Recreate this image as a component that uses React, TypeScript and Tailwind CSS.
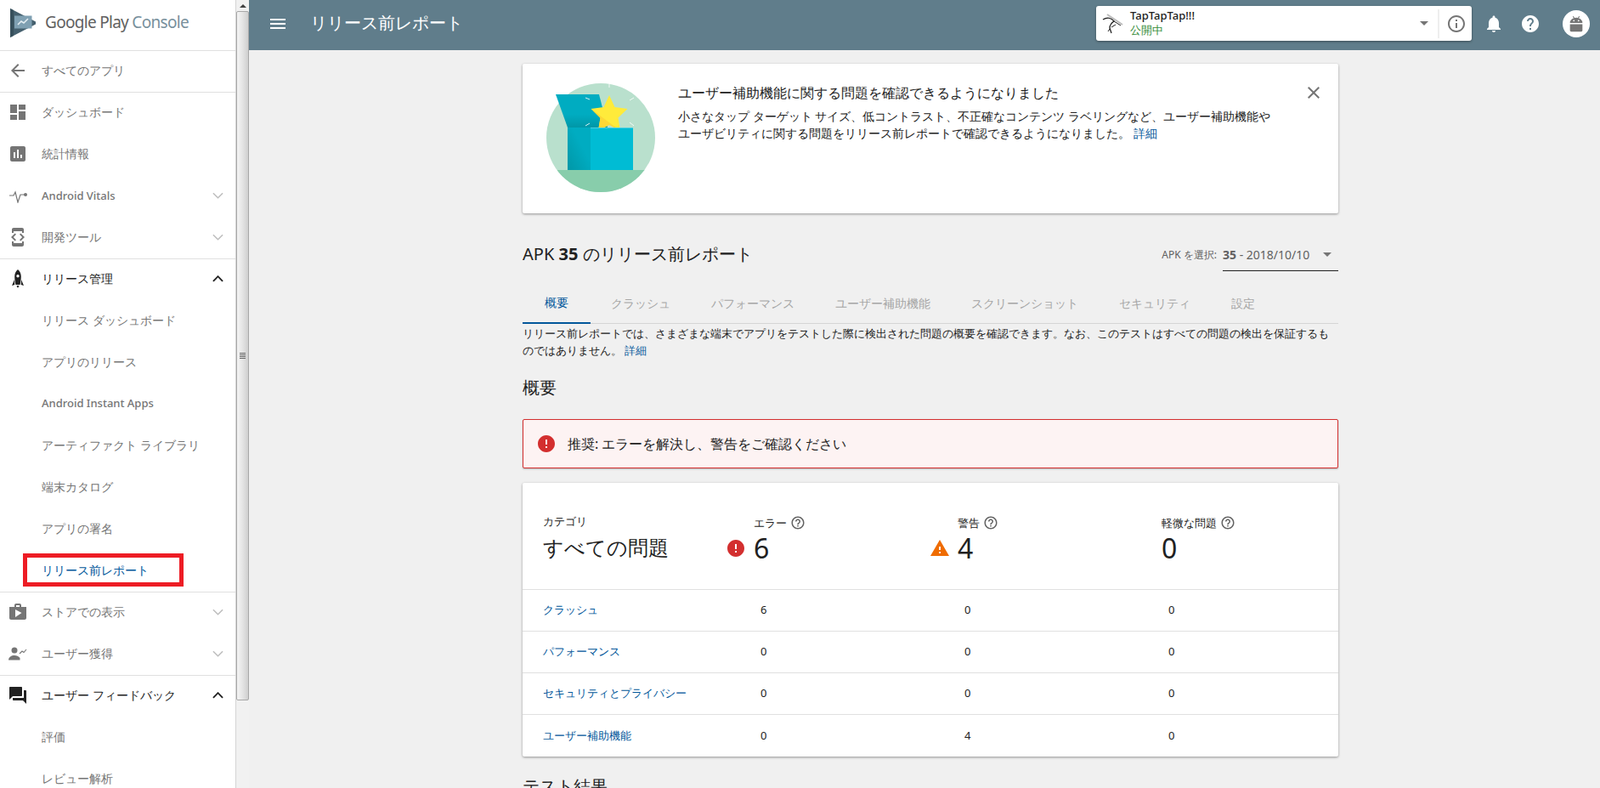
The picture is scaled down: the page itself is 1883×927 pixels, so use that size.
import React from "react";

const P = {
  back: "M20 11H7.83l5.59-5.59L12 4l-8 8 8 8 1.41-1.41L7.83 13H20v-2z",
  dash: "M3 13h8V3H3v10zm0 8h8v-6H3v6zm10 0h8V11h-8v10zm0-18v6h8V3h-8z",
  stats: "M19 3H5c-1.1 0-2 .9-2 2v14c0 1.1.9 2 2 2h14c1.1 0 2-.9 2-2V5c0-1.1-.9-2-2-2zM9 17H7v-7h2v7zm4 0h-2V7h2v10zm4 0h-2v-4h2v4z",
  dev: "M7 5h10v2h2V3c0-1.1-.9-1.99-2-1.99L7 1c-1.1 0-2 .9-2 2v4h2V5zm8.41 11.59L20 12l-4.59-4.59L14 8.83 17.17 12 14 15.17l1.41 1.42zM10 15.17L6.83 12 10 8.83 8.59 7.41 4 12l4.59 4.59L10 15.17zM17 19H7v-2H5v4c0 1.1.9 2 2 2h10c1.1 0 2-.9 2-2v-4h-2v2z",
  shop: "M16 6V4c0-1.11-.89-2-2-2h-4c-1.11 0-2 .89-2 2v2H2v13c0 1.11.89 2 2 2h16c1.11 0 2-.89 2-2V6h-6zm-6-2h4v2h-4V4zM9 18V9l7.5 4L9 18z",
  qa: "M21 6h-2v9H6v2c0 .55.45 1 1 1h11l4 4V7c0-.55-.45-1-1-1zm-4 6V3c0-.55-.45-1-1-1H3c-.55 0-1 .45-1 1v14l4-4h10c.55 0 1-.45 1-1z",
  bell: "M12 22c1.1 0 2-.9 2-2h-4c0 1.1.89 2 2 2zm6-6v-5c0-3.07-1.64-5.64-4.5-6.32V4c0-.83-.67-1.5-1.5-1.5s-1.5.67-1.5 1.5v.68C7.63 5.36 6 7.92 6 11v5l-2 2v1h16v-1l-2-2z",
  help: "M12 2C6.48 2 2 6.48 2 12s4.48 10 10 10 10-4.48 10-10S17.52 2 12 2zm1 17h-2v-2h2v2zm2.07-7.75l-.9.92C13.45 12.9 13 13.5 13 15h-2v-.5c0-1.1.45-2.1 1.17-2.83l1.24-1.26c.37-.36.59-.86.59-1.41 0-1.1-.9-2-2-2s-2 .9-2 2H8c0-2.21 1.79-4 4-4s4 1.79 4 4c0 .88-.36 1.68-.93 2.25z",
  helpO: "M11 18h2v-2h-2v2zm1-16C6.48 2 2 6.48 2 12s4.48 10 10 10 10-4.48 10-10S17.52 2 12 2zm0 18c-4.41 0-8-3.59-8-8s3.59-8 8-8 8 3.59 8 8-3.59 8-8 8zm0-14c-2.21 0-4 1.79-4 4h2c0-1.1.9-2 2-2s2 .9 2 2c0 2-3 1.75-3 5h2c0-2.25 3-2.5 3-5 0-2.21-1.79-4-4-4z",
  info: "M11 7h2v2h-2zm0 4h2v6h-2zm1-9C6.48 2 2 6.48 2 12s4.48 10 10 10 10-4.48 10-10S17.52 2 12 2zm0 18c-4.41 0-8-3.59-8-8s3.59-8 8-8 8 3.59 8 8-3.59 8-8 8z",
  warn: "M1 21h22L12 2 1 21zm12-3h-2v-2h2v2zm0-4h-2v-4h2v4z",
  err: "M12 2C6.48 2 2 6.48 2 12s4.48 10 10 10 10-4.48 10-10S17.52 2 12 2zm1 15h-2v-2h2v2zm0-4h-2V7h2v6z",
  menu: "M3 18h18v-2H3v2zm0-5h18v-2H3v2zm0-7v2h18V6H3z",
  close: "M19 6.41L17.59 5 12 10.59 6.41 5 5 6.41 10.59 12 5 17.59 6.41 19 12 13.41 17.59 19 19 17.59 13.41 12z",
};

function I({ d, className }: { d: string; className?: string }) {
  return (
    <svg viewBox="0 0 24 24" fill="currentColor" className={className}>
      <path d={d} />
    </svg>
  );
}

function Chevron({ up }: { up?: boolean }) {
  return (
    <svg viewBox="0 0 14 8" fill="none" stroke="currentColor" strokeWidth={up ? 2 : 1.6} className={"ml-auto mr-[14px] w-[13px] h-[8px] " + (up ? "text-[#212121]" : "text-[#bdbdbd]")}>
      <path d={up ? "M1 7l6-6 6 6" : "M1 1l6 6 6-6"} />
    </svg>
  );
}

function Row({
  icon,
  label,
  chevron,
  strong,
  last,
  medium,
}: {
  icon: React.ReactNode;
  label: string;
  chevron?: "up" | "down";
  strong?: boolean;
  last?: boolean;
  medium?: boolean;
}) {
  return (
    <div className={"h-[49px] flex items-center pl-2 pb-[3px] text-sm " + (strong ? "text-[#212121] " : "text-[#757575] ") + (last ? "border-b border-[#e0e0e0]" : "")}>
      <div className="w-[26px] flex justify-center shrink-0">{icon}</div>
      <span className={"ml-[15px] " + (medium ? "font-medium text-[13px]" : "")}>{label}</span>
      {chevron && <Chevron up={chevron === "up"} />}
    </div>
  );
}

function Sub({ label, medium }: { label: string; medium?: boolean }) {
  return <div className={"h-[49px] flex items-center pl-[49px] pb-[3px] text-[#757575] " + (medium ? "font-medium text-[13px]" : "text-sm")}>{label}</div>;
}

function Sidebar() {
  const ic = "w-6 h-6 text-[#757575]";
  return (
    <aside className="w-[278px] shrink-0 h-full bg-white border-r border-[#d4d4d4] overflow-hidden">
      <div className="h-[60px] border-b border-[#e0e0e0] flex items-center pl-3 pb-[6px]">
        <svg viewBox="0 0 30 34" className="w-[30px] h-[34px] shrink-0">
          <path d="M0 0l30 15.5a2 2 0 010 3L0 34z" fill="#45606e" />
          <path d="M0 0l4 2v30l-4 2z" fill="#37505c" />
          <path d="M5 8.5h20.5v15H5z" fill="#7fa0b2" />
          <path d="M9 19l4-4 3 2 5-5" fill="none" stroke="#e3edf2" strokeWidth="1.6" />
        </svg>
        <span className="ml-[11px] text-[19px] tracking-[-0.7px] text-[#616161] whitespace-nowrap">
          Google Play <span className="text-[#78909c]">Console</span>
        </span>
      </div>
      <div className="h-[49px] border-b border-[#e0e0e0] flex items-center pl-2 pb-[2px] text-sm text-[#757575]">
        <div className="w-[26px] flex justify-center">
          <I d={P.back} className={ic} />
        </div>
        <span className="ml-[15px]">すべてのアプリ</span>
      </div>
      <Row icon={<I d={P.dash} className={ic} />} label="ダッシュボード" />
      <Row icon={<I d={P.stats} className={ic} />} label="統計情報" />
      <Row
        icon={
          <svg viewBox="0 0 24 18" className="w-6 h-[18px] text-[#757575]" fill="none" stroke="currentColor" strokeWidth="1.2">
            <path d="M2 9h5l2-4 3 12 3-9h5" />
            <circle cx="21" cy="8" r="2" fill="currentColor" stroke="none" />
          </svg>
        }
        label="Android Vitals"
        chevron="down"
        medium
      />
      <Row icon={<I d={P.dev} className={ic} />} label="開発ツール" chevron="down" last />
      <Row
        icon={
          <svg viewBox="0 0 14 22" className="w-[14px] h-[22px] text-[#212121]" fill="currentColor">
            <path fillRule="evenodd" d="M7 0c2.6 2 3.8 5 3.8 8.5 0 3-.6 6.5-1.3 9.5h-5C3.8 15 3.2 11.5 3.2 8.5 3.2 5 4.4 2 7 0zm0 6a1.7 1.7 0 100 3.4A1.7 1.7 0 007 6z" />
            <path d="M3 12L0 19l3.3-1zM11 12l3 7-3.3-1zM5.5 19h3L7 22z" />
          </svg>
        }
        label="リリース管理"
        chevron="up"
        strong
      />
      <Sub label="リリース ダッシュボード" />
      <Sub label="アプリのリリース" />
      <Sub label="Android Instant Apps" medium />
      <Sub label="アーティファクト ライブラリ" />
      <Sub label="端末カタログ" />
      <Sub label="アプリの署名" />
      <div className="relative h-[49px] flex items-center pl-[49px] pb-[3px] text-sm text-[#01579b] border-b border-[#e0e0e0]">
        リリース前レポート
        <div className="absolute left-[27px] top-[3px] w-[189px] h-[39px] border-[5px] border-[#ed1c24]" />
      </div>
      <Row icon={<I d={P.shop} className={ic} />} label="ストアでの表示" chevron="down" />
      <Row
        icon={
          <svg viewBox="0 0 22 16" className="w-[22px] h-4 text-[#757575]" fill="currentColor">
            <circle cx="7" cy="4" r="3.5" />
            <path d="M0 15.5c0-3.5 3.5-5.5 7-5.5 2.5 0 5 1 6.5 3v2.5z" />
            <path d="M13 8l3-3 2 1.5L21 3" fill="none" stroke="currentColor" strokeWidth="1.1" />
          </svg>
        }
        label="ユーザー獲得"
        chevron="down"
        last
      />
      <Row icon={<I d={P.qa} className="w-6 h-6 text-[#212121]" />} label="ユーザー フィードバック" chevron="up" strong />
      <Sub label="評価" />
      <Sub label="レビュー解析" />
    </aside>
  );
}

function Scrollbar() {
  return (
    <div className="w-[15px] shrink-0 h-full bg-[#f1f1f1] flex flex-col">
      <div className="h-[13px] flex items-center justify-center">
        <div className="w-0 h-0 border-l-[4px] border-r-[4px] border-b-[4px] border-l-transparent border-r-transparent border-b-[#404040]" />
      </div>
      <div className="h-[811px] w-[15px] rounded-[2px] border border-[#a8a8a8] bg-gradient-to-r from-[#f4f4f4] via-[#e4e4e4] to-[#cfcfcf] flex flex-col items-center justify-center gap-[1px]">
        <div className="w-[7px] h-[1px] bg-[#666]" />
        <div className="w-[7px] h-[1px] bg-[#666]" />
        <div className="w-[7px] h-[1px] bg-[#666]" />
        <div className="w-[7px] h-[1px] bg-[#666]" />
      </div>
    </div>
  );
}

function Header() {
  return (
    <header className="h-[59px] shrink-0 bg-[#607d8b] flex items-center pl-[22px] pr-[12px] pb-[4px] text-white">
      <I d={P.menu} className="w-6 h-6" />
      <span className="ml-[26px] text-[20px] -mt-[1px]">リリース前レポート</span>
      <div className="ml-auto w-[442px] h-[41px] bg-white rounded-[3px] shadow-[0_1px_3px_rgba(0,0,0,0.4)] flex items-center text-[#212121]">
        <svg viewBox="0 0 26 26" className="ml-[7px] w-[26px] h-[26px] shrink-0" fill="none" stroke="#222" strokeWidth="1">
          <path d="M1 8c5-3 10-2 13 2-3 2-5 5-5 8l2 6" strokeWidth="1.3" />
          <path d="M6 2l18 12" stroke="#bbb" strokeWidth="2" />
          <path d="M14 10l8 5M11 17l5-3M9 19l-2 3" />
        </svg>
        <div className="ml-[7px] flex flex-col -mt-[2px]">
          <span className="text-[13px] font-medium leading-[16px]">TapTapTap!!!</span>
          <span className="text-[13px] leading-[18px] text-[#388e3c]">公開中</span>
        </div>
        <div className="ml-auto w-0 h-0 border-l-[5px] border-r-[5px] border-t-[5px] border-l-transparent border-r-transparent border-t-[#757575]" />
        <div className="ml-[11px] w-[2px] h-[34px] bg-[#eeeeee]" />
        <I d={P.info} className="ml-[8px] mr-[6px] w-6 h-6 text-[#757575]" />
      </div>
      <I d={P.bell} className="ml-[14px] w-6 h-6" />
      <I d={P.help} className="ml-[19px] w-6 h-6" />
      <div className="ml-[26px] w-8 h-8 rounded-full bg-white flex items-center justify-center">
        <svg viewBox="0 0 24 24" className="w-[22px] h-[22px] text-[#757575]" fill="currentColor">
          <path d="M8 2.5L9.5 5M16 2.5L14.5 5" stroke="currentColor" strokeWidth="1.2" fill="none" />
          <path fillRule="evenodd" d="M4 11a8 7 0 0116 0zM9 7a1 1 0 100 2 1 1 0 000-2zm6 0a1 1 0 100 2 1 1 0 000-2z" />
          <path d="M4 12.5h16v8a1.5 1.5 0 01-1.5 1.5h-13A1.5 1.5 0 014 20.5z" />
        </svg>
      </div>
    </header>
  );
}

function Illustration() {
  return (
    <svg viewBox="0 0 128 128" className="w-32 h-32 shrink-0">
      <defs>
        <clipPath id="c">
          <circle cx="64" cy="64" r="64" />
        </clipPath>
        <linearGradient id="g" x1="0" y1="1" x2="1" y2="0">
          <stop offset="0" stopColor="#0097a7" />
          <stop offset="0.6" stopColor="#00acc1" />
        </linearGradient>
        <linearGradient id="l" x1="0" y1="1" x2="0" y2="0">
          <stop offset="0" stopColor="#0097a7" />
          <stop offset="0.4" stopColor="#00acc1" />
        </linearGradient>
      </defs>
      <g clipPath="url(#c)">
        <rect width="128" height="128" fill="#b9e0cd" />
        <rect y="102" width="128" height="26" fill="#88cdab" />
      </g>
      <path d="M11 13h51l10 39H25z" fill="url(#l)" />
      <path d="M74 14l6.5 14 15 2-11 10.5 2.5 15-13-7-13 7 2.5-15-11-10.5 15-2z" fill="#ffeb3b" />
      <path d="M52.5 30l34.5 26-13-7-13 7 2.5-15z" fill="#fdd835" />
      <path d="M25 52h27v50H25z" fill="url(#g)" />
      <path d="M52 52h50v50H52z" fill="#00bcd4" />
      <path d="M52 52h50v1H52z" fill="#4dd0e1" />
      <g stroke="#fff" strokeWidth="1" opacity="0.85">
        <path d="M74 1v4M46 17l5 2M103 17l-5 3M46 50l5-3M103 50l-5-4" />
      </g>
    </svg>
  );
}

function Link({ children }: { children: React.ReactNode }) {
  return <span className="text-[#01579b]">{children}</span>;
}

const tabs = ["概要", "クラッシュ", "パフォーマンス", "ユーザー補助機能", "スクリーンショット", "セキュリティ", "設定"];

function Tabs() {
  return (
    <div className="mt-[14px] h-[47px] border-b border-[#d5d5d5] flex text-sm">
      {tabs.map((t, i) => (
        <div
          key={t}
          className={
            "h-[47px] flex items-center justify-center px-6 pb-[2px] " +
            (i === 0 ? "w-[80px] text-[#01579b] border-b-[2px] border-[#01579b]" : "text-[#a6a6a6]")
          }
        >
          {t}
        </div>
      ))}
    </div>
  );
}

const rows = [
  ["クラッシュ", "6", "0", "0"],
  ["パフォーマンス", "0", "0", "0"],
  ["セキュリティとプライバシー", "0", "0", "0"],
  ["ユーザー補助機能", "0", "4", "0"],
];

function HeadLabel({ text }: { text: string }) {
  return (
    <div className="flex items-center text-[13px] text-[#212121] leading-[20px]">
      {text}
      <I d={P.helpO} className="ml-[4px] w-[18px] h-[18px] text-[#616161]" />
    </div>
  );
}

function Table() {
  return (
    <div className="mt-[17px] h-[322px] bg-white rounded-[2px] shadow-[0_1px_3px_rgba(0,0,0,0.4)]">
      <div className="h-[126px] border-b border-[#e0e0e0] grid grid-cols-[248px_240px_240px_1fr] pl-6 items-start pt-[37px] text-[#212121]">
        <div>
          <div className="text-[13px] leading-[20px] -mt-[2px]">カテゴリ</div>
          <div className="text-[24px] leading-[32px] mt-[5px]">すべての問題</div>
        </div>
        <div>
          <HeadLabel text="エラー" />
          <div className="relative text-[32px] leading-[36px] mt-[2px]">
            6
            <I d={P.err} className="absolute -left-[33px] top-[6px] w-6 h-6 text-[#d32f2f]" />
          </div>
        </div>
        <div>
          <HeadLabel text="警告" />
          <div className="relative text-[32px] leading-[36px] mt-[2px]">
            4
            <I d={P.warn} className="absolute -left-[33px] top-[6px] w-6 h-6 text-[#ef6c00]" />
          </div>
        </div>
        <div>
          <HeadLabel text="軽微な問題" />
          <div className="text-[32px] leading-[36px] mt-[2px]">0</div>
        </div>
      </div>
      {rows.map((r, i) => (
        <div
          key={r[0]}
          className={
            "h-[49px] grid grid-cols-[248px_240px_240px_1fr] pl-6 items-center text-[13px] text-[#212121] " +
            (i < 3 ? "border-b border-[#e0e0e0]" : "")
          }
        >
          <Link>{r[0]}</Link>
          <span className="pl-2">{r[1]}</span>
          <span className="pl-2">{r[2]}</span>
          <span className="pl-2">{r[3]}</span>
        </div>
      ))}
    </div>
  );
}

export default function App() {
  return (
    <div className="w-[1883px] h-[927px] flex overflow-hidden bg-[#f0f0f0] text-[#212121] font-['Roboto','Noto_Sans_CJK_JP',sans-serif]">
      <Sidebar />
      <Scrollbar />
      <main className="flex-1 min-w-0 h-full flex flex-col">
        <Header />
        <div className="flex-1 overflow-hidden pl-[322px] pt-4">
          <div className="w-[960px]">
            <section className="h-[176px] bg-white rounded-[2px] shadow-[0_1px_3px_rgba(0,0,0,0.4)] flex pl-[28px] pt-[23px] relative">
              <Illustration />
              <div className="ml-[27px] -mt-[1px]">
                <div className="text-base leading-[24px]">ユーザー補助機能に関する問題を確認できるようになりました</div>
                <div className="mt-[6px] text-sm leading-[20px] text-[#212121]">
                  小さなタップ ターゲット サイズ、低コントラスト、不正確なコンテンツ ラベリングなど、ユーザー補助機能や
                  <br />
                  ユーザビリティに関する問題をリリース前レポートで確認できるようになりました。 <Link>詳細</Link>
                </div>
              </div>
              <I d={P.close} className="absolute right-[17px] top-[22px] w-6 h-6 text-[#757575]" />
            </section>

            <div className="mt-[29px] h-[40px] flex items-center relative">
              <h1 className="text-[20px] font-normal -mt-[2px]">
                APK <span className="font-bold">35</span> のリリース前レポート
              </h1>
              <div className="ml-auto flex items-center text-[#616161]">
                <span className="text-xs mr-[7px]">APK を選択:</span>
                <div className="w-[136px] h-[38px] border-b border-[#212121] flex items-center text-sm">
                  <span>
                    <span className="font-bold">35</span> - 2018/10/10
                  </span>
                  <div className="ml-auto mr-[8px] w-0 h-0 border-l-[5px] border-r-[5px] border-t-[5px] border-l-transparent border-r-transparent border-t-[#757575]" />
                </div>
              </div>
            </div>

            <Tabs />

            <p className="text-[13px] leading-[20px] mt-[1px]">
              リリース前レポートでは、さまざまな端末でアプリをテストした際に検出された問題の概要を確認できます。なお、このテストはすべての問題の検出を保証するも
              <br />
              のではありません。 <Link>詳細</Link>
            </p>

            <h2 className="mt-[20px] text-[20px] leading-[28px] font-normal">概要</h2>

            <div className="mt-[23px] h-[58px] bg-[#fdf3f3] border border-[#d32f2f] rounded-[2px] shadow-[0_1px_2px_rgba(0,0,0,0.25)] flex items-center pl-[15px]">
              <I d={P.err} className="w-6 h-6 text-[#d32f2f]" />
              <span className="ml-[13px] text-base">推奨: エラーを解決し、警告をご確認ください</span>
            </div>

            <Table />

            <h2 className="mt-[21px] text-[20px] leading-[28px] font-normal">テスト結果</h2>
          </div>
        </div>
      </main>
    </div>
  );
}
